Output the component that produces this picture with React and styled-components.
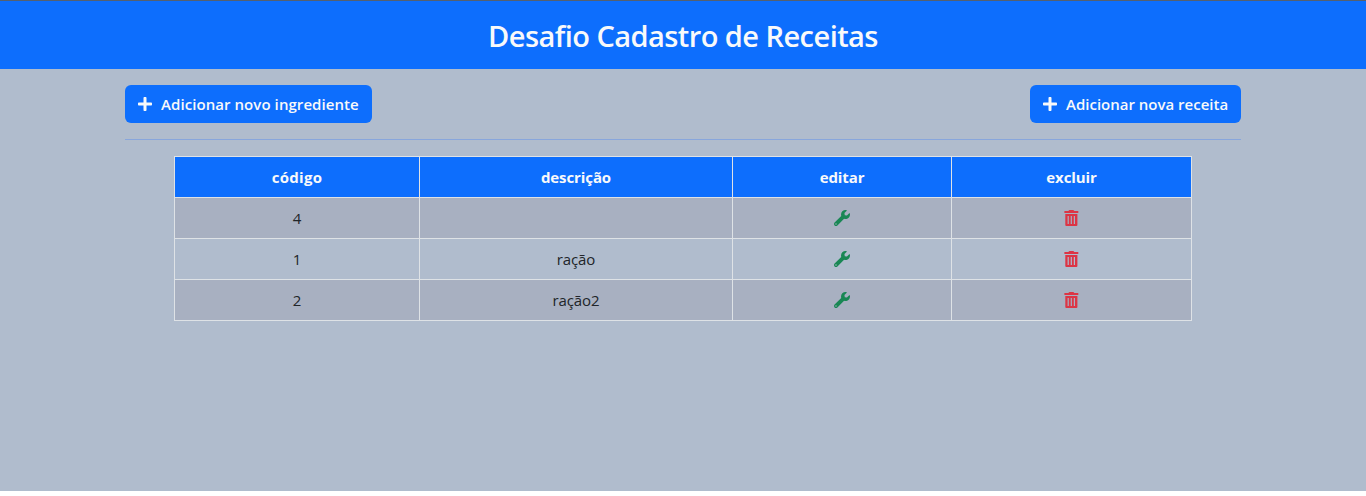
import React from "react";
import styled, { createGlobalStyle } from "styled-components";
import { FaPlus, FaWrench } from "react-icons/fa";

const GlobalStyle = createGlobalStyle`
  *, *::before, *::after { box-sizing: border-box; }
  body {
    margin: 0;
    background: #fff;
    color: #212529;
    font-family: "Open Sans", "Noto Sans", sans-serif;
    font-size: 16px;
    line-height: 24px;
  }
`;

const Page = styled.div`
  height: 491px;
  background: #b0bccd;
`;

const Header = styled.header`
  height: 69px;
  border-top: 1px solid #55606e;
  background: #0d6efd;
  display: flex;
  align-items: center;
  justify-content: center;
  padding-top: 1px;
`;

const Title = styled.h1`
  margin: 0;
  color: #f8f9fa;
  font-size: 29px;
  font-weight: 600;
  line-height: 38px;
  letter-spacing: -0.55px;
`;

const Container = styled.main`
  width: 1116px;
  margin: 0 auto;
  padding-top: 16px;
`;

const Toolbar = styled.div`
  display: flex;
  justify-content: space-between;
  padding-bottom: 16px;
  border-bottom: 1px solid #88a6dc;
`;

const Button = styled.button`
  display: flex;
  align-items: center;
  width: ${({ $width }) => $width}px;
  height: 38px;
  padding: 0 12px;
  gap: 8px;
  border: 0;
  border-radius: 6px;
  background: #0d6efd;
  color: #f8f9fa;
  font: 600 15px/24px "Open Sans", "Noto Sans", sans-serif;
  letter-spacing: ${({ $spacing }) => $spacing}px;
  white-space: nowrap;
  svg { flex: none; width: 16px; height: 16px; }
`;

const Table = styled.table`
  width: 1018px;
  margin: 16px auto 0;
  border-collapse: collapse;
  table-layout: fixed;
  text-align: center;
`;

const Cell = styled.td`
  height: 41px;
  padding: 0;
  border: 1px solid #dee2e6;
  font-size: 15px;
  letter-spacing: -0.1px;
`;

const HeadCell = styled(Cell)`
  width: ${({ $width }) => $width}px;
  background: #0d6efd;
  color: #f8f9fa;
  font-weight: 700;
  letter-spacing: ${({ $spacing }) => $spacing}px;
`;

const Row = styled.tr`
  &:nth-child(odd) { background: #a8b0c1; }
`;

const Action = styled.span`
  display: flex;
  justify-content: center;
  color: ${({ $color }) => $color};
`;

const TrashSvg = styled.svg`
  display: block;
  width: 15px;
  height: 16px;
  fill: currentColor;
`;

const TrashIcon = () => (
  <TrashSvg viewBox="0 0 15 16">
    <path d="M.4 1.1h4L5 .3Q5.2 0 5.6 0h3.5q.4 0 .6.3l.6.8h4v1.9H.4z" />
    <path
      fillRule="evenodd"
      d="M1.3 4h12.1v11q0 1-1 1H2.3q-1 0-1-1zM3.6 6v8h1.2V6zM6.7 6v8h1.2V6zM9.8 6v8H11V6z"
    />
  </TrashSvg>
);

const columns = [
  { label: "código", width: 245, spacing: 0.3 },
  { label: "descrição", width: 313, spacing: -0.1 },
  { label: "editar", width: 219, spacing: -0.1 },
  { label: "excluir", width: 240, spacing: -0.1 },
];

const recipes = [
  { code: 4, description: "" },
  { code: 1, description: "ração" },
  { code: 2, description: "ração2" },
];

export default function App() {
  return (
    <Page>
      <GlobalStyle />
      <Header>
        <Title>Desafio Cadastro de Receitas</Title>
      </Header>
      <Container>
        <Toolbar>
          <Button $width={247} $spacing={0.07}><FaPlus />Adicionar novo ingrediente</Button>
          <Button $width={211} $spacing={0}><FaPlus />Adicionar nova receita</Button>
        </Toolbar>
        <Table>
          <thead>
            <tr>
              {columns.map((c) => (
                <HeadCell as="th" key={c.label} $width={c.width} $spacing={c.spacing}>{c.label}</HeadCell>
              ))}
            </tr>
          </thead>
          <tbody>
            {recipes.map((r) => (
              <Row key={r.code}>
                <Cell>{r.code}</Cell>
                <Cell>{r.description}</Cell>
                <Cell><Action $color="#198754"><FaWrench size={16} /></Action></Cell>
                <Cell><Action $color="#dc3545"><TrashIcon /></Action></Cell>
              </Row>
            ))}
          </tbody>
        </Table>
      </Container>
    </Page>
  );
}
